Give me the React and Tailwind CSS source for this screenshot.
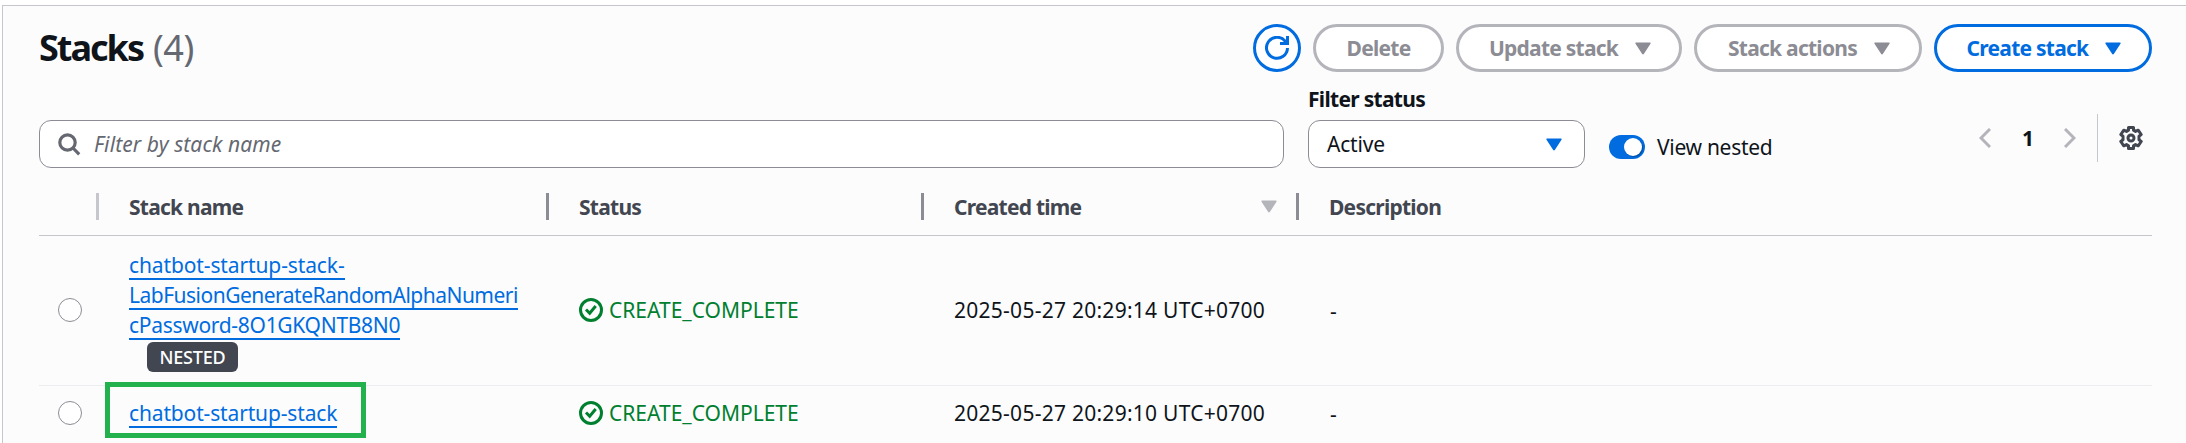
import React from "react";

const Triangle = ({ className = "" }) => (
  <svg viewBox="0 0 16 13" className={`h-[13px] w-4 shrink-0 ${className}`} fill="currentColor">
    <path d="M1.2.5h13.6c.8 0 1.1.7.7 1.3L8.8 12c-.4.6-1.2.6-1.6 0L.5 1.8C.1 1.200.4.5 1.2.5Z" />
  </svg>
);

const Refresh = () => (
  <svg viewBox="0 0 24 24" className="size-6" fill="none" stroke="currentColor" strokeWidth="3">
    <path d="M22.5 12A10.500 10.500 0 1 1 20 5L22 7.300" />
    <path d="M22.500 0v7.500H15" />
  </svg>
);

const Search = () => (
  <svg viewBox="0 0 24 24" className="size-6 text-[#656871]" fill="none" stroke="currentColor" strokeWidth="3.200">
    <circle cx="10.500" cy="10.500" r="7.700" />
    <path d="m16 16 6.200 6.300" />
  </svg>
);

const Gear = () => (
  <svg viewBox="0 0 24 24" className="size-6 text-[#424650]" fill="none" stroke="currentColor" strokeWidth="3" strokeLinejoin="round">
    <path d="M9.500 1.500h5v2.700l2 1.200 2.700-1.200 3 4.300-2.200 1.700v3.600l2.200 1.700-3 4.300-2.700-1.200-2 1.200v2.700h-5v-2.700l-2-1.200-2.700 1.200-3-4.300L4 13.800v-3.600L1.800 8.500l3-4.300 2.700 1.200 2-1.200V1.500Z" />
    <circle cx="12" cy="12" r="3" />
  </svg>
);

const Chevron = ({ flip }) => (
  <svg viewBox="0 0 12 20" className="h-5 w-3 text-[#b4b4bb]" fill="none" stroke="currentColor" strokeWidth="3">
    <path d={flip ? "M1 1l9 9-9 9" : "M11 1l-9 9 9 9"} />
  </svg>
);

const Complete = () => (
  <svg viewBox="0 0 24 24" className="size-6 shrink-0" fill="none" stroke="currentColor" strokeWidth="3">
    <circle cx="12" cy="12" r="10.500" />
    <path d="m7 11.500 3.700 3.700 6-7.200" />
  </svg>
);

const Button = ({ label, caret, primary, width }) => (
  <button
    className={`flex h-12 items-center justify-center rounded-full border-3 bg-white font-bold tracking-[-0.75px] ${width} ${
      primary ? "border-[#006ce0] text-[#006ce0]" : "border-[#b4b4bb] text-[#8c8c94]"
    } ${caret ? "gap-[17px] pl-[2px]" : ""}`}
  >
    <span className="pb-px whitespace-nowrap">{label}</span>
    {caret && <Triangle />}
  </button>
);

const HeaderCell = ({ children, divider = "bg-[#8c8c94]", className = "" }) => (
  <div className={`flex h-[27px] items-center justify-between ${className}`}>
    <span className="tracking-[-0.75px]">{children}</span>
    {divider && <span className={`h-[27px] w-[3px] ${divider}`} />}
  </div>
);

const linkLine = "w-fit h-[30px] border-b-2 border-[#006ce0] leading-[31px] whitespace-nowrap";
const columns = "grid grid-cols-[60px_450px_375px_375px_1fr]";

const Row = ({ time, children, className }) => (
  <div className={`${columns} ${className}`}>
    <div className="flex items-center pb-[2px] pl-[19px]">
      <span className="size-6 rounded-full border-[1.5px] border-[#8c8c94] bg-white" />
    </div>
    <div className="pl-[30px]">{children}</div>
    <div className="flex items-center gap-[6px] pb-[2px] pl-[30px] text-[#00802f]">
      <Complete />
      <span>CREATE_COMPLETE</span>
    </div>
    <div className="flex items-center pb-px pl-[30px] tracking-[0.26px] whitespace-nowrap">{time}</div>
    <div className="flex items-center pl-[31px]">-</div>
  </div>
);

export default function App() {
  return (
    <div className="h-[443px] w-[2186px] overflow-hidden bg-white pt-[5px] font-['Noto_Sans',sans-serif] text-[21px] leading-[30px] text-[#0f141a]">
      <div className="ml-[2px] h-full border-t border-l border-[#c6c6cd] bg-[#fcfcfd] pr-[34px] pl-9">
        <header className="flex items-center justify-between pt-[18px]">
          <h1 className="flex items-baseline gap-[10px] text-[36px] leading-[48px]">
            <span className="font-bold tracking-[-2px]">Stacks</span>
            <span className="tracking-[-0.5px] text-[#656871]">(4)</span>
          </h1>
          <div className="flex gap-3">
            <button className="flex size-12 items-center justify-center rounded-full border-3 border-[#006ce0] bg-white text-[#006ce0]">
              <Refresh />
            </button>
            <Button label="Delete" width="w-[131px]" />
            <Button label="Update stack" caret width="w-[226px]" />
            <Button label="Stack actions" caret width="w-[228px]" />
            <Button label="Create stack" caret primary width="w-[218px]" />
          </div>
        </header>

        <div className="flex h-24 items-end">
          <div className="flex h-12 w-[1245px] items-center gap-[13px] rounded-xl border border-[#8c8c94] bg-white pl-[17px] text-[#656871]">
            <Search />
            <span className="tracking-[0.1px] italic">Filter by stack name</span>
          </div>
          <div className="ml-6 flex h-24 w-[277px] flex-col justify-between pt-3">
            <span className="font-bold tracking-[-0.7px]">Filter status</span>
            <div className="flex h-12 items-center justify-between rounded-xl border border-[#8c8c94] bg-white pr-[22px] pl-[18px]">
              <span className="tracking-[-0.2px]">Active</span>
              <Triangle className="text-[#006ce0]" />
            </div>
          </div>
          <div className="ml-6 flex h-[42px] items-center gap-3">
            <span className="flex h-6 w-9 items-center justify-end rounded-full bg-[#006ce0] pr-[3px]">
              <span className="size-[18px] rounded-full bg-white shadow-[1px_1px_1px_rgba(0,0,0,0.3)]" />
            </span>
            <span className="tracking-[-0.3px]">View nested</span>
          </div>
          <div className="mb-[6px] ml-auto flex h-12 items-center pr-[9px]">
            <Chevron />
            <span className="w-[73px] pb-px pl-px text-center font-bold">1</span>
            <Chevron flip />
            <span className="mr-[21px] ml-[21px] h-12 w-px bg-[#c6c6cd]" />
            <Gear />
          </div>
        </div>

        <div className={`${columns} h-[68px] items-center border-b border-[#c6c6cd] pt-[10px] font-bold text-[#424650]`}>
          <HeaderCell divider="bg-[#c6c6cd]" />
          <HeaderCell className="pl-[30px]">Stack name</HeaderCell>
          <HeaderCell className="pl-[30px]">Status</HeaderCell>
          <div className="flex h-[27px] items-center pl-[30px]">
            <span className="tracking-[-0.75px]">Created time</span>
            <Triangle className="mr-[19px] ml-auto text-[#b4b4bb]" />
            <span className="h-[27px] w-[3px] bg-[#8c8c94]" />
          </div>
          <HeaderCell divider="" className="pl-[30px]">Description</HeaderCell>
        </div>

        <Row className="h-[150px] border-b border-[#ebebf0]" time="2025-05-27 20:29:14 UTC+0700">
          <div className="pt-[14px] text-[#006ce0]">
            <div className={`${linkLine} tracking-[-0.12px]`}>chatbot-startup-stack-</div>
            <div className={`${linkLine} tracking-[-0.51px]`}>LabFusionGenerateRandomAlphaNumeri</div>
            <div className={`${linkLine} tracking-[-0.3px]`}>cPassword-8O1GKQNTB8N0</div>
          </div>
          <span className="mt-[2px] ml-[18px] flex h-[30px] w-[91px] items-center justify-center rounded-md bg-[#424650] pb-px text-[18px] font-medium tracking-[-0.2px] text-white">
            NESTED
          </span>
        </Row>
        <Row className="h-[55px]" time="2025-05-27 20:29:10 UTC+0700">
          <div className="relative pt-[12px] text-[#006ce0]">
            <div className={`${linkLine} tracking-[-0.15px]`}>chatbot-startup-stack</div>
            <span className="absolute -top-1 -left-6 h-14 w-[261px] border-5 border-[#22b14c]" />
          </div>
        </Row>
      </div>
    </div>
  );
}
